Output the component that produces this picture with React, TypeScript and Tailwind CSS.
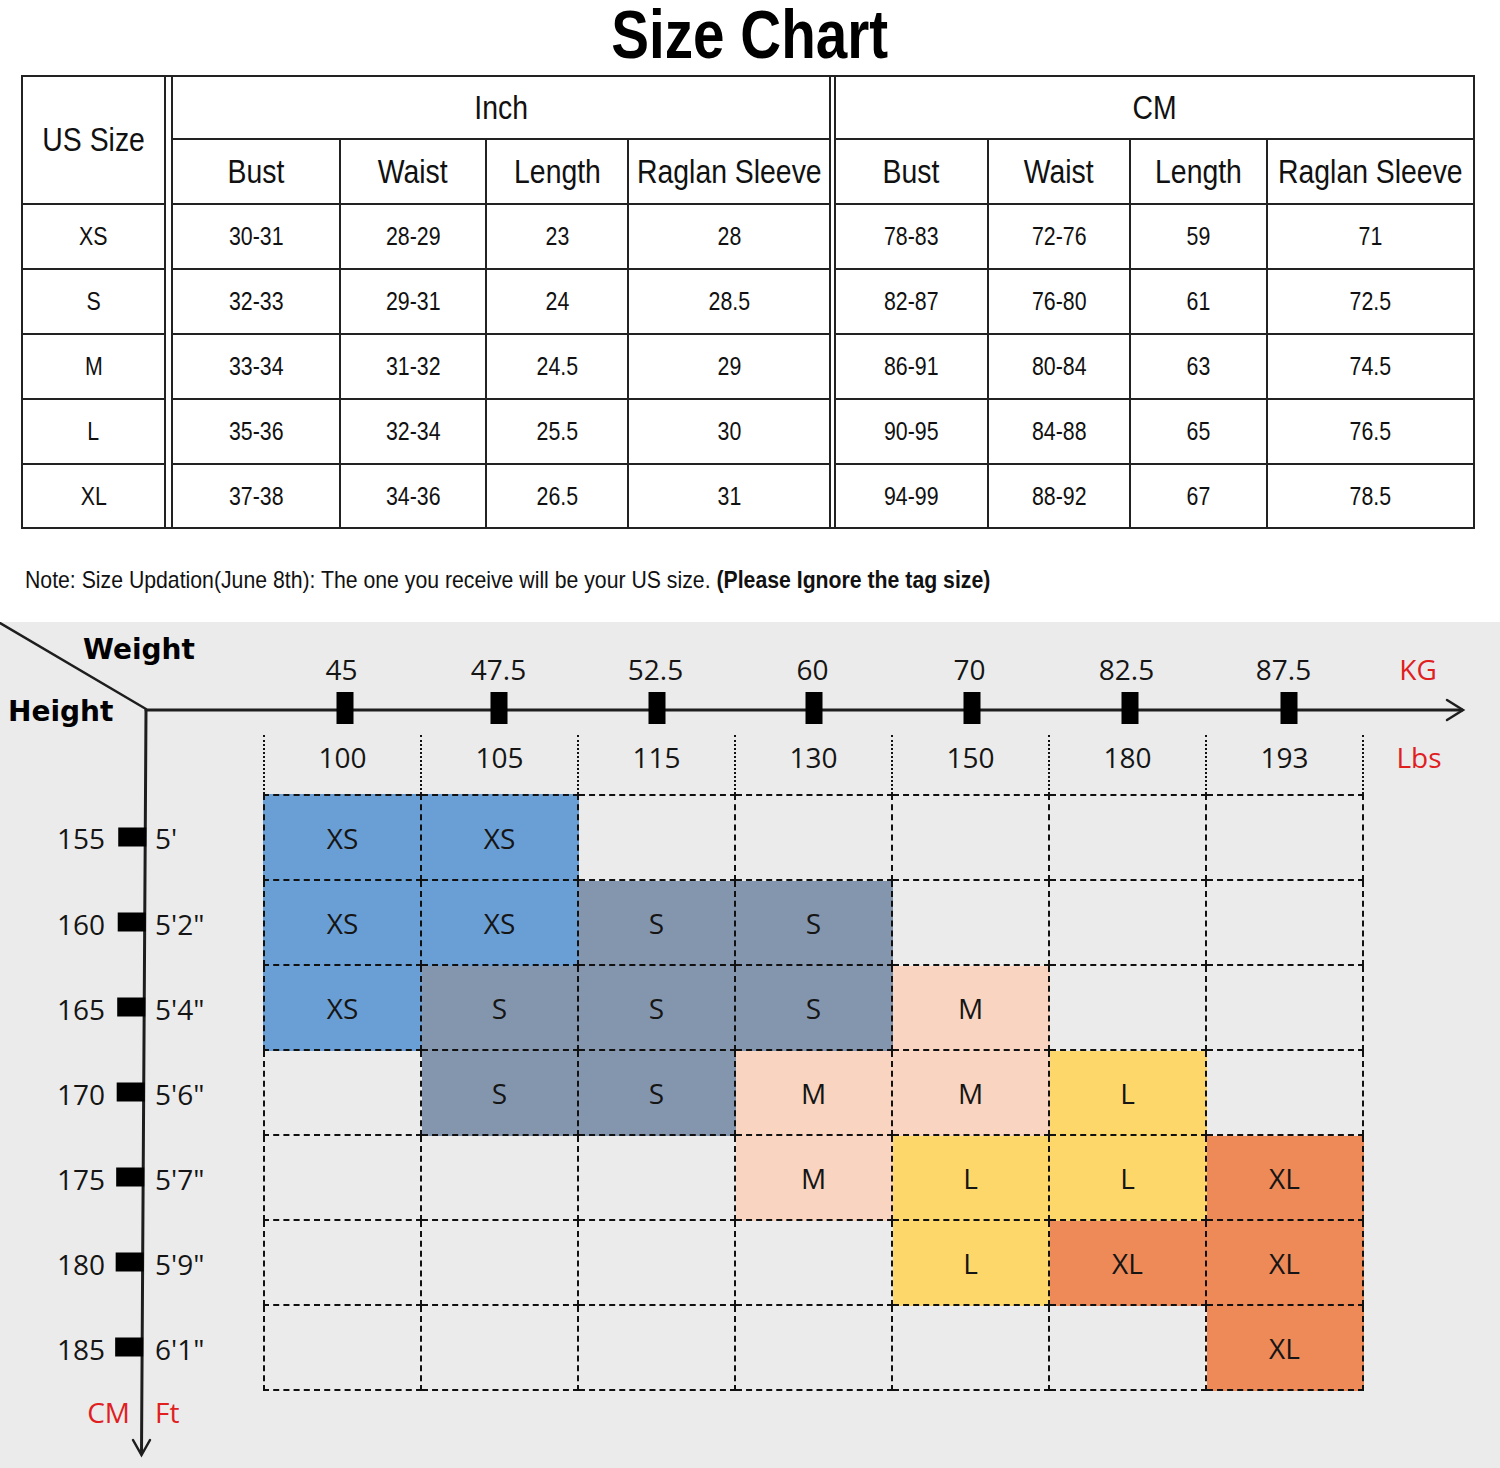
import React from "react";

const SANS = "font-[family-name:Liberation_Sans,Arial,sans-serif]";
const CHART = "font-[family-name:Open_Sans,sans-serif]";

const sizeRows = [
  ["XS", "30-31", "28-29", "23", "28", "78-83", "72-76", "59", "71"],
  ["S", "32-33", "29-31", "24", "28.5", "82-87", "76-80", "61", "72.5"],
  ["M", "33-34", "31-32", "24.5", "29", "86-91", "80-84", "63", "74.5"],
  ["L", "35-36", "32-34", "25.5", "30", "90-95", "84-88", "65", "76.5"],
  ["XL", "37-38", "34-36", "26.5", "31", "94-99", "88-92", "67", "78.5"],
];

const inchCols = ["w-[168px]", "w-[146px]", "w-[142px]", "w-[200px]"];
const cmCols = ["w-[153px]", "w-[142px]", "w-[137px]", "w-[205px]"];
const subHeads = ["Bust", "Waist", "Length", "Raglan Sleeve"];

const weights = ["45", "47.5", "52.5", "60", "70", "82.5", "87.5"];
const lbs = ["100", "105", "115", "130", "150", "180", "193"];
const heights: [string, string][] = [
  ["155", "5'"],
  ["160", "5'2\""],
  ["165", "5'4\""],
  ["170", "5'6\""],
  ["175", "5'7\""],
  ["180", "5'9\""],
  ["185", "6'1\""],
];

const fit: (string | null)[][] = [
  ["XS", "XS", null, null, null, null, null],
  ["XS", "XS", "S", "S", null, null, null],
  ["XS", "S", "S", "S", "M", null, null],
  [null, "S", "S", "M", "M", "L", null],
  [null, null, null, "M", "L", "L", "XL"],
  [null, null, null, null, "L", "XL", "XL"],
  [null, null, null, null, null, null, "XL"],
];

const fills: Record<string, string> = {
  XS: "bg-[#6a9fd6]",
  S: "bg-[#8496ae]",
  M: "bg-[#f9d4c0]",
  L: "bg-[#fdd76a]",
  XL: "bg-[#ed8a58]",
};

const tickX = [345, 499, 657, 814, 972, 1130, 1289];

function axisX(y: number) {
  return 146 - ((y - 88) * 4.5) / 745;
}

// the source chart uses a squeezed gothic face, so text is narrowed a bit
function Head({ children }: { children: React.ReactNode }) {
  return <span className="inline-block scale-x-[0.86] whitespace-nowrap text-[33px]">{children}</span>;
}

function Val({ children }: { children: React.ReactNode }) {
  return <span className="inline-block scale-x-[0.82] whitespace-nowrap text-[26px]">{children}</span>;
}

function Cell({
  w,
  line,
  children,
}: {
  w: string;
  line: boolean;
  children: React.ReactNode;
}) {
  return (
    <div
      className={`${w} flex shrink-0 items-center justify-center overflow-visible ${line ? "border-r-2 border-[#222]" : ""}`}
    >
      {children}
    </div>
  );
}

function UnitBlock({
  title,
  cols,
  offset,
  width,
}: {
  title: string;
  cols: string[];
  offset: number;
  width: string;
}) {
  return (
    <div className={`${width} flex shrink-0 flex-col`}>
      <div className="flex h-[63px] items-center justify-center border-b-2 border-[#222]">
        <Head>{title}</Head>
      </div>
      <div className="flex h-[65px] border-b-2 border-[#222]">
        {subHeads.map((h, i) => (
          <Cell key={h} w={cols[i]} line={i < 3}>
            <Head>{h}</Head>
          </Cell>
        ))}
      </div>
      {sizeRows.map((row, r) => (
        <div
          key={row[0]}
          className={`flex ${r < 4 ? "h-[65px] border-b-2 border-[#222]" : "h-[62px]"}`}
        >
          {row.slice(offset, offset + 4).map((v, i) => (
            <Cell key={i} w={cols[i]} line={i < 3}>
              <Val>{v}</Val>
            </Cell>
          ))}
        </div>
      ))}
    </div>
  );
}

function SizeTable() {
  return (
    <div className={`ml-[21px] flex w-[1454px] border-2 border-[#222] text-[#111] ${SANS}`}>
      <div className="flex w-[141px] shrink-0 flex-col">
        <div className="flex h-[128px] items-center justify-center border-b-2 border-[#222]">
          <Head>US Size</Head>
        </div>
        {sizeRows.map((row, r) => (
          <div
            key={row[0]}
            className={`flex items-center justify-center ${r < 4 ? "h-[65px] border-b-2 border-[#222]" : "h-[62px]"}`}
          >
            <Val>{row[0]}</Val>
          </div>
        ))}
      </div>
      <div className="w-[9px] shrink-0 border-x-2 border-[#222]" />
      <UnitBlock title="Inch" cols={inchCols} offset={1} width="w-[656px]" />
      <div className="w-[7px] shrink-0 border-x-2 border-[#222]" />
      <UnitBlock title="CM" cols={cmCols} offset={5} width="w-[637px]" />
    </div>
  );
}

function Axes() {
  return (
    <svg
      className="pointer-events-none absolute left-0 top-0"
      width={1500}
      height={846}
      viewBox="0 0 1500 846"
    >
      <g stroke="#1e1e1e" strokeWidth={3} fill="none" strokeLinecap="round">
        <line x1={0} y1={1} x2={146} y2={87} strokeWidth={2.5} />
        <line x1={146} y1={88} x2={1462} y2={88} />
        <polyline points="1447,78 1463,88 1447,98" strokeWidth={2.5} />
        <line x1={146} y1={88} x2={141.5} y2={832} />
        <polyline points="133,818 141.5,833 150,818" strokeWidth={2.5} />
      </g>
      {tickX.map((x) => (
        <rect key={x} x={x - 8.5} y={70} width={17} height={32} fill="#000" />
      ))}
      {heights.map((_, i) => {
        const y = 215 + i * 85;
        const right = axisX(y) + 1;
        return <rect key={i} x={right - 28} y={y - 9.5} width={28} height={19} fill="#000" />;
      })}
    </svg>
  );
}

function FitChart() {
  return (
    <div className={`relative h-[846px] bg-[#ebebeb] text-[#151515] ${CHART}`}>
      <Axes />
      <div className="relative flex h-[113px]">
        <div className="flex w-[263px] flex-col font-[family-name:DejaVu_Sans,sans-serif] text-[28px] font-bold leading-[32px] text-black">
          <span className="ml-[83px] mt-[12px]">Weight</span>
          <span className="ml-[8px] mt-[30px]">Height</span>
        </div>
        {weights.map((w) => (
          <div key={w} className="w-[157px] pt-[28px] text-center text-[28px] leading-[38px]">
            {w}
          </div>
        ))}
        <div className="w-[112px] pt-[28px] text-center text-[28px] leading-[38px] text-[#e0201e]">KG</div>
      </div>

      <div className="relative flex h-[59px]">
        <div className="w-[263px]" />
        {lbs.map((l, i) => (
          <div
            key={l}
            className={`pt-[3px] text-center text-[28px] leading-[38px] border-l-2 border-dotted border-[#111] ${i === 6 ? "w-[159px] border-r-2" : "w-[157px]"}`}
          >
            {l}
          </div>
        ))}
        <div className="w-[110px] pt-[3px] text-center text-[28px] leading-[38px] text-[#e0201e]">Lbs</div>
      </div>

      <div className="relative flex flex-col">
        {heights.map(([cm, ft], r) => (
          <div key={cm} className="flex">
            <div className="flex w-[263px] items-center text-[28px]">
              <span className="w-[105px] text-right">{cm}</span>
              <span className="ml-[50px]">{ft}</span>
            </div>
            {fit[r].map((s, c) => (
              <div
                key={c}
                className={`flex items-center justify-center border-b-2 border-r-2 border-dashed border-[#111] text-[28px] ${
                  r === 0 ? "h-[87px] border-t-2" : "h-[85px]"
                } ${c === 0 ? "w-[159px] border-l-2" : "w-[157px]"} ${s ? fills[s] : ""}`}
              >
                {s}
              </div>
            ))}
          </div>
        ))}
      </div>

      <div className="relative mt-[2px] flex text-[28px] leading-[38px] text-[#e0201e]">
        <span className="w-[130px] text-right">CM</span>
        <span className="ml-[25px]">Ft</span>
      </div>
    </div>
  );
}

export default function App() {
  return (
    <div className="w-[1500px] bg-white">
      <div className="h-[622px]">
        <div className={`h-[75px] text-center leading-[70px] text-black ${SANS}`}>
          <span className="inline-block scale-x-[0.82] text-[69px] font-bold">Size Chart</span>
        </div>
        <SizeTable />
        <p className={`ml-[25px] mt-[36px] text-[#111] ${SANS}`}>
          <span className="inline-block origin-left scale-x-[0.885] whitespace-nowrap text-[24px] leading-[30px]">
            Note: Size Updation(June 8th): The one you receive will be your US size.{" "}
            <span className="font-bold">(Please Ignore the tag size)</span>
          </span>
        </p>
      </div>
      <FitChart />
    </div>
  );
}
